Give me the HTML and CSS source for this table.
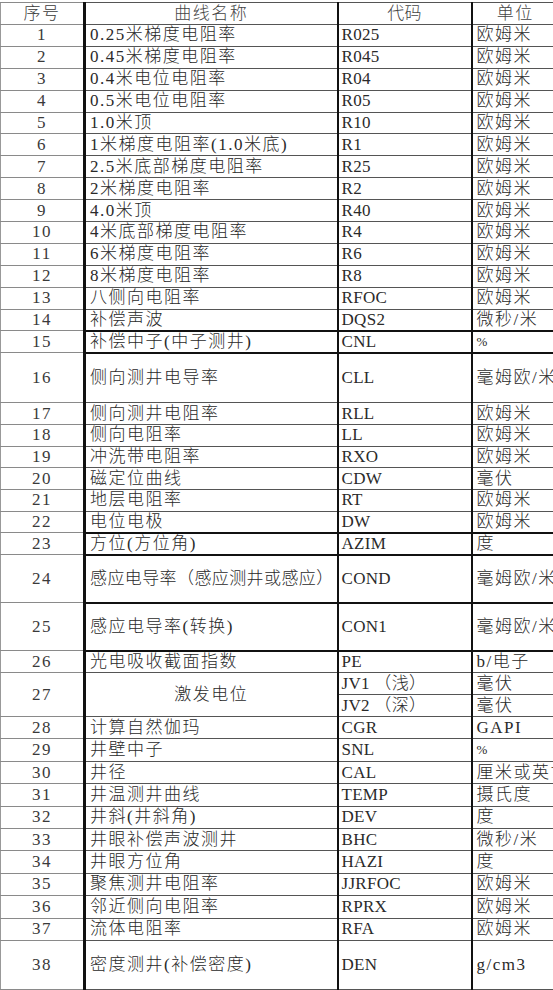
FILE: index.html
```html
<!DOCTYPE html>
<html lang="zh-CN">
<head>
<meta charset="utf-8">
<title>曲线代码表</title>
<link rel="stylesheet" href="styles.css">
</head>
<body>
<table class="sheet">
  <colgroup>
    <col class="w1"><col class="w2"><col class="w3"><col class="w4">
  </colgroup>
  <thead>
    <tr class="hd">
      <th class="c1">序号</th><th class="c2 ctr">曲线名称</th><th class="c3 ctr">代码</th><th class="c4 ctr">单位</th>
    </tr>
  </thead>
  <tbody>
    <tr class="a"><td class="c1">1</td><td class="c2">0.25米梯度电阻率</td><td class="c3">R025</td><td class="c4">欧姆米</td></tr>
    <tr class="a"><td class="c1">2</td><td class="c2">0.45米梯度电阻率</td><td class="c3">R045</td><td class="c4">欧姆米</td></tr>
    <tr class="a"><td class="c1">3</td><td class="c2">0.4米电位电阻率</td><td class="c3">R04</td><td class="c4">欧姆米</td></tr>
    <tr class="a"><td class="c1">4</td><td class="c2">0.5米电位电阻率</td><td class="c3">R05</td><td class="c4">欧姆米</td></tr>
    <tr class="a"><td class="c1">5</td><td class="c2">1.0米顶</td><td class="c3">R10</td><td class="c4">欧姆米</td></tr>
    <tr class="a"><td class="c1">6</td><td class="c2">1米梯度电阻率(1.0米底)</td><td class="c3">R1</td><td class="c4">欧姆米</td></tr>
    <tr class="a"><td class="c1">7</td><td class="c2">2.5米底部梯度电阻率</td><td class="c3">R25</td><td class="c4">欧姆米</td></tr>
    <tr class="a"><td class="c1">8</td><td class="c2">2米梯度电阻率</td><td class="c3">R2</td><td class="c4">欧姆米</td></tr>
    <tr class="a"><td class="c1">9</td><td class="c2">4.0米顶</td><td class="c3">R40</td><td class="c4">欧姆米</td></tr>
    <tr class="a"><td class="c1">10</td><td class="c2">4米底部梯度电阻率</td><td class="c3">R4</td><td class="c4">欧姆米</td></tr>
    <tr class="a"><td class="c1">11</td><td class="c2">6米梯度电阻率</td><td class="c3">R6</td><td class="c4">欧姆米</td></tr>
    <tr class="a"><td class="c1">12</td><td class="c2">8米梯度电阻率</td><td class="c3">R8</td><td class="c4">欧姆米</td></tr>
    <tr class="a"><td class="c1">13</td><td class="c2">八侧向电阻率</td><td class="c3">RFOC</td><td class="c4">欧姆米</td></tr>
    <tr class="a thick"><td class="c1">14</td><td class="c2">补偿声波</td><td class="c3">DQS2</td><td class="c4">微秒/米</td></tr>
    <tr class="a thick"><td class="c1">15</td><td class="c2">补偿中子(中子测井)</td><td class="c3">CNL</td><td class="c4 pct">%</td></tr>
    <tr class="tall"><td class="c1">16</td><td class="c2">侧向测井电导率</td><td class="c3">CLL</td><td class="c4">毫姆欧/米</td></tr>
    <tr class="b"><td class="c1">17</td><td class="c2">侧向测井电阻率</td><td class="c3">RLL</td><td class="c4">欧姆米</td></tr>
    <tr class="b"><td class="c1">18</td><td class="c2">侧向电阻率</td><td class="c3">LL</td><td class="c4">欧姆米</td></tr>
    <tr class="b"><td class="c1">19</td><td class="c2">冲洗带电阻率</td><td class="c3">RXO</td><td class="c4">欧姆米</td></tr>
    <tr class="b"><td class="c1">20</td><td class="c2">磁定位曲线</td><td class="c3">CDW</td><td class="c4">毫伏</td></tr>
    <tr class="b"><td class="c1">21</td><td class="c2">地层电阻率</td><td class="c3">RT</td><td class="c4">欧姆米</td></tr>
    <tr class="b thick"><td class="c1">22</td><td class="c2">电位电极</td><td class="c3">DW</td><td class="c4">欧姆米</td></tr>
    <tr class="a thick"><td class="c1">23</td><td class="c2">方位(方位角)</td><td class="c3">AZIM</td><td class="c4">度</td></tr>
    <tr class="tall2 thick"><td class="c1">24</td><td class="c2 tight">感应电导率（感应测井或感应）</td><td class="c3">COND</td><td class="c4">毫姆欧/米</td></tr>
    <tr class="tall2 thick"><td class="c1">25</td><td class="c2">感应电导率(转换)</td><td class="c3">CON1</td><td class="c4">毫姆欧/米</td></tr>
    <tr class="a"><td class="c1">26</td><td class="c2">光电吸收截面指数</td><td class="c3">PE</td><td class="c4">b/电子</td></tr>
    <tr class="a"><td class="c1" rowspan="2">27</td><td class="c2 ctr" rowspan="2">激发电位</td><td class="c3">JV1 （浅）</td><td class="c4">毫伏</td></tr>
    <tr class="a"><td class="c3">JV2 （深）</td><td class="c4">毫伏</td></tr>
    <tr class="c"><td class="c1">28</td><td class="c2">计算自然伽玛</td><td class="c3">CGR</td><td class="c4">GAPI</td></tr>
    <tr class="c"><td class="c1">29</td><td class="c2">井壁中子</td><td class="c3">SNL</td><td class="c4 pct">%</td></tr>
    <tr class="c"><td class="c1">30</td><td class="c2">井径</td><td class="c3">CAL</td><td class="c4">厘米或英寸</td></tr>
    <tr class="c"><td class="c1">31</td><td class="c2">井温测井曲线</td><td class="c3">TEMP</td><td class="c4">摄氏度</td></tr>
    <tr class="c"><td class="c1">32</td><td class="c2">井斜(井斜角)</td><td class="c3">DEV</td><td class="c4">度</td></tr>
    <tr class="c"><td class="c1">33</td><td class="c2">井眼补偿声波测井</td><td class="c3">BHC</td><td class="c4">微秒/米</td></tr>
    <tr class="c"><td class="c1">34</td><td class="c2">井眼方位角</td><td class="c3">HAZI</td><td class="c4">度</td></tr>
    <tr class="c"><td class="c1">35</td><td class="c2">聚焦测井电阻率</td><td class="c3">JJRFOC</td><td class="c4">欧姆米</td></tr>
    <tr class="c"><td class="c1">36</td><td class="c2">邻近侧向电阻率</td><td class="c3">RPRX</td><td class="c4">欧姆米</td></tr>
    <tr class="c"><td class="c1">37</td><td class="c2">流体电阻率</td><td class="c3">RFA</td><td class="c4">欧姆米</td></tr>
    <tr class="tall3"><td class="c1">38</td><td class="c2">密度测井(补偿密度)</td><td class="c3">DEN</td><td class="c4">g/cm3</td></tr>
  </tbody>
</table>
</body>
</html>
```

FILE: styles.css
```css
html, body {
  margin: 0;
  padding: 0;
  background: #fff;
  overflow: hidden;
}

.sheet {
  margin-top: 2px;
  border-collapse: collapse;
  table-layout: fixed;
  width: 558px;
  font-family: "Liberation Serif", "Noto Sans CJK SC", serif;
  font-size: 17px;
  font-weight: 300;
  color: #2a2a2a;
  letter-spacing: 1.5px;
}

.w1 { width: 84px; }
.w2 { width: 253px; }
.w3 { width: 134px; }
.w4 { width: 87px; }

.sheet th,
.sheet td {
  padding: 0 0 0 3px;
  font-weight: 300;
  white-space: nowrap;
  overflow: hidden;
  vertical-align: middle;
  text-align: left;
  line-height: 18px;
  border-top: 1px solid #555;
  border-bottom: 1px solid #555;
}

.sheet .c1 {
  text-align: center;
  padding: 0;
  border-left: 1px solid #999;
  border-right: 3px solid #111;
  border-top-color: #8a8a8a;
  border-bottom-color: #8a8a8a;
  color: #3a3a3a;
}

.sheet .c2 {
  padding-left: 4px;
  border-right: 2px solid #111;
}

.sheet .c3 {
  letter-spacing: 0.3px;
  border-right: 2px solid #111;
}

.sheet .c4 {
  padding-left: 4px;
  border-right: 1px solid #555;
}

.sheet .ctr {
  text-align: center;
  padding-left: 0;
}

.sheet .tight {
  letter-spacing: 0.4px;
}

.sheet .pct {
  font-size: 13px;
}

.hd { height: 22px; }
.hd th { color: #444; }

.a { height: 21.9px; }
.b { height: 21.7px; }
.c { height: 22.4px; }
.tall { height: 50px; }
.tall2 { height: 48px; }
.tall3 { height: 49px; }

.thick td {
  border-bottom: 2px solid #111;
}
.thick td.c1 {
  border-bottom: 1px solid #8a8a8a;
}
```
